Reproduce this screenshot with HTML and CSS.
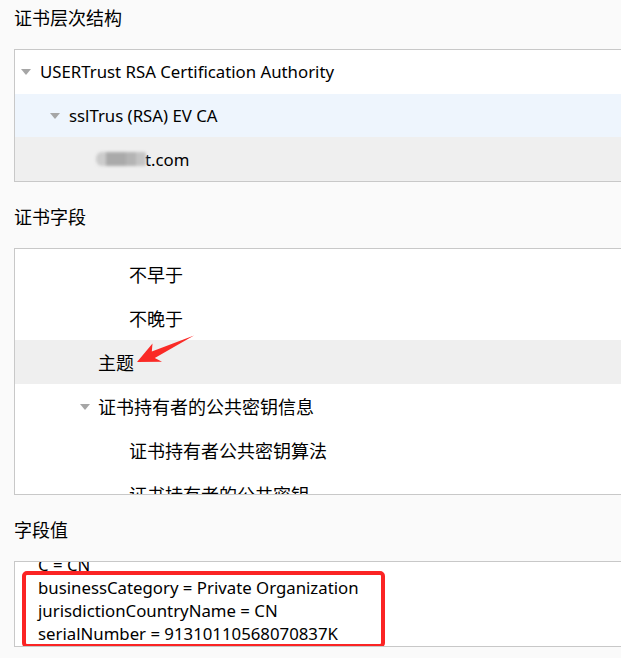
FILE: index.html
```html
<!DOCTYPE html>
<html lang="zh-CN">
<head>
    <meta charset="UTF-8">
    <meta name="viewport" content="width=device-width, initial-scale=1.0">
    <title>证书查看器</title>
    <link rel="stylesheet" href="styles.css">
</head>
<body>
    <div class="viewer">
        <h2 class="section-title first">证书层次结构</h2>
        <div class="box tree">
            <div class="row level-0"><span class="toggle"></span><span class="latin">USERTrust RSA Certification Authority</span></div>
            <div class="row level-1 hover"><span class="toggle"></span><span class="latin">sslTrus (RSA) EV CA</span></div>
            <div class="row level-2 selected"><span class="blurred"></span><span class="latin">t.com</span></div>
        </div>

        <h2 class="section-title">证书字段</h2>
        <div class="box fields">
            <div class="scroll">
                <div class="row level-3">有效期</div>
                <div class="row level-3">不早于</div>
                <div class="row level-3">不晚于</div>
                <div class="row level-2 selected">主题</div>
                <div class="row level-2 parent"><span class="toggle"></span>证书持有者的公共密钥信息</div>
                <div class="row level-3">证书持有者公共密钥算法</div>
                <div class="row level-3">证书持有者的公共密钥</div>
            </div>
            <svg class="arrow" width="70" height="40" viewBox="0 0 70 40">
                <polygon points="7,31 22.5,12.5 21.8,20.5 64,4.5 24.8,27 32,30.8" fill="#fa2a26"/>
            </svg>
        </div>

        <h2 class="section-title">字段值</h2>
        <div class="box value">
            <div class="value-text latin">
                <div>C = CN</div>
                <div>businessCategory = Private Organization</div>
                <div>jurisdictionCountryName = CN</div>
                <div>serialNumber = 91310110568070837K</div>
            </div>
            <div class="highlight"></div>
        </div>
    </div>
</body>
</html>
```

FILE: styles.css
```css
html, body {
    margin: 0;
    padding: 0;
    background: #fafafa;
    overflow: hidden;
}
body {
    font-family: "Noto Sans", "Noto Sans CJK SC", sans-serif;
    font-size: 18px;
    color: #000;
}
.latin {
    font-size: 16.8px;
}
.viewer {
    padding: 0 0 0 14px;
}
.section-title {
    margin: 17px 0 13px;
    font-size: 18px;
    font-weight: normal;
    line-height: 36px;
}
.section-title.first {
    margin-top: 0;
}
.box {
    position: relative;
    border: 1px solid #c8c8c8;
    border-right: none;
    margin-right: -20px;
    background: #fff;
    overflow: hidden;
}
.row {
    display: flex;
    align-items: center;
    height: 44px;
    white-space: nowrap;
}
.tree .row {
    height: 43.7px;
}
.row.hover {
    background: #eef5fd;
}
.row.selected {
    background: #efefef;
}
.level-0 { padding-left: 6px; }
.level-1 { padding-left: 35px; }
.level-2 { padding-left: 84px; }
.level-3 { padding-left: 114px; }
.tree .level-2 { padding-left: 81px; }
.fields .level-2 { padding-left: 83px; }
.fields .level-2.parent { padding-left: 65px; }

.toggle {
    width: 0;
    height: 0;
    border-left: 5px solid transparent;
    border-right: 5px solid transparent;
    border-top: 6px solid #a6a6a6;
    margin-right: 9px;
    margin-top: 1px;
}
.parent .toggle {
    margin-right: 8px;
}
.blurred {
    display: inline-block;
    width: 50px;
    height: 14px;
    margin-right: -1px;
    background: linear-gradient(90deg, #ccc 0 20%, #aaa 20% 60%, #b4b4b4 60% 80%, #c4c4c4 80%);
    filter: blur(1.5px);
    border-radius: 6px 2px 2px 6px;
}

.fields {
    height: 245px;
}
.scroll {
    margin-top: -41px;
}
.arrow {
    position: absolute;
    left: 115px;
    top: 82px;
}

.value {
    height: 84px;
}
.value-text {
    margin-top: -9px;
    padding-left: 23px;
    line-height: 23px;
}
.highlight {
    position: absolute;
    left: 7px;
    top: 9px;
    width: 355px;
    height: 69px;
    border: 4px solid #fb2424;
    border-radius: 5px;
}
```
